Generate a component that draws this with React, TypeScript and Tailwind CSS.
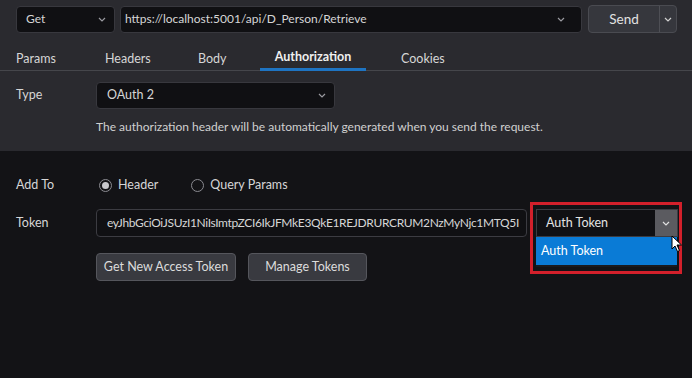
import React from "react";

const Chevron = ({ className = "" }: { className?: string }) => (
  <svg width="8" height="5" viewBox="0 0 8 5" className={className}>
    <path d="M1 1 L4 4 L7 1" fill="none" stroke="currentColor" strokeWidth="1.2" />
  </svg>
);

export default function App() {
  const font = { fontFamily: '"Segoe UI", Lato, "Noto Sans", sans-serif' };
  return (
    <div className="w-[692px] h-[378px] overflow-hidden flex flex-col text-[12px] text-[#d6d6d6] bg-[#131316]" style={font}>
      {/* Top section */}
      <div className="h-[151px] shrink-0 bg-[#2a2a2f] flex flex-col">
        <div className="flex items-center pl-4 pr-[15px] pt-[5px] h-[33px]">
          <div className="w-[99px] h-[27px] rounded-[4px] bg-[#101013] border border-[#38383e] flex items-center justify-between pl-[9px] pr-[8px]">
            <span>Get</span>
            <Chevron className="text-[#9a9aa0]" />
          </div>
          <div className="ml-[5px] flex-1 h-[27px] rounded-[4px] bg-[#101013] border border-[#38383e] flex items-center justify-between pl-[4px] pr-[16px]">
            <span>https://localhost:5001/api/D_Person/Retrieve</span>
            <Chevron className="text-[#9a9aa0]" />
          </div>
          <div className="ml-[6px] w-[89px] h-[28px] rounded-[4px] bg-[#36373d] border border-[#4a4b51] flex items-center">
            <div className="flex-1 h-full flex items-center justify-center text-[13.5px] text-[#e2e2e2] border-r border-[#4e4f55]">Send</div>
            <div className="w-[16px] h-full flex items-center justify-center">
              <Chevron className="text-[#d0d0d0]" />
            </div>
          </div>
        </div>
        <div className="mt-[11px] h-[27px] flex items-stretch border-b border-[#45464b] text-[12.5px]">
          <div className="w-[105px] pl-4 pt-[4px] flex items-center">Params</div>
          <div className="w-[93px] pt-[4px] flex items-center">Headers</div>
          <div className="w-[62px] pt-[4px] flex items-center">Body</div>
          <div className="w-[106px] flex items-center justify-center font-bold text-[#f0f0f0] border-b-[3px] border-[#1e74c2] pt-[3px] -mb-px">Authorization</div>
          <div className="ml-[35px] pt-[4px] flex items-center">Cookies</div>
        </div>
        <div className="mt-[11px] flex items-center h-[27px]">
          <div className="w-[96px] pl-4 text-[12.5px]">Type</div>
          <div className="w-[239px] h-[27px] rounded-[4px] bg-[#101013] border border-[#38383e] flex items-center justify-between pl-[10px] pr-[8px] text-[12.5px]">
            <span>OAuth 2</span>
            <Chevron className="text-[#9a9aa0]" />
          </div>
        </div>
        <div className="mt-[9px] pl-[96px] text-[#d0d0d0]">The authorization header will be automatically generated when you send the request.</div>
      </div>

      {/* Bottom section */}
      <div className="flex-1 flex flex-col text-[12.5px]">
        <div className="mt-[26px] flex items-center h-[16px]">
          <div className="w-[99px] pl-4">Add To</div>
          <div className="w-[13px] h-[13px] rounded-full border border-[#8a8a90] flex items-center justify-center">
            <div className="w-[7px] h-[7px] rounded-full bg-[#c8c8cc]" />
          </div>
          <span className="ml-[6px]">Header</span>
          <div className="ml-[33px] w-[13px] h-[13px] rounded-full border border-[#8a8a90]" />
          <span className="ml-[6px]">Query Params</span>
        </div>
        <div className="mt-[16px] flex items-center h-[28px]">
          <div className="w-[96px] pl-4">Token</div>
          <div className="w-[431px] h-[28px] rounded-[4px] bg-[#101013] border border-[#3c3c42] flex items-center pl-[10px] pr-[6px] overflow-hidden whitespace-nowrap text-[12px] tracking-[-0.35px]">
            <span>eyJhbGciOiJSUzI1NiIsImtpZCI6IkJFMkE3QkE1REJDRURCRUM2NzMyNjc1MTQ5I</span>
          </div>
          <div className="relative ml-[9px] w-[142px] h-[28px]">
            <div className="absolute -left-[6px] -top-[7px] w-[152px] h-[72px] border-[3px] border-[#d3202b] pointer-events-none" />
            <div className="w-full h-full bg-[#101013] border border-[#3c3c42] flex items-center">
              <span className="flex-1 pl-[9px] text-[#e4e4e4]">Auth Token</span>
              <div className="w-[22px] h-full bg-[#5b5b60] flex items-center justify-center">
                <Chevron className="text-[#e0e0e0]" />
              </div>
            </div>
            <div className="absolute left-0 top-[28px] w-[141px] h-[30px] bg-[#0a7bd6] border-b-[2px] border-[#1a1a1e] flex items-center pl-[5px] text-white">Auth Token</div>
            <svg className="absolute left-[135px] top-[26px]" width="12" height="18" viewBox="0 0 12 18">
              <path d="M1 1 L1 14 L4 11 L6.5 16.5 L8.5 15.5 L6 10 L10.5 10 Z" fill="#ffffff" stroke="#000000" strokeWidth="1" />
            </svg>
          </div>
        </div>
        <div className="mt-[16px] flex items-center pl-[96px]">
          <div className="w-[140px] h-[28px] rounded-[4px] bg-[#393a40] border border-[#55565c] flex items-center justify-center text-[#dcdcdc]">Get New Access Token</div>
          <div className="ml-[12px] w-[119px] h-[28px] rounded-[4px] bg-[#393a40] border border-[#55565c] flex items-center justify-center text-[#dcdcdc]">Manage Tokens</div>
        </div>
      </div>
    </div>
  );
}
